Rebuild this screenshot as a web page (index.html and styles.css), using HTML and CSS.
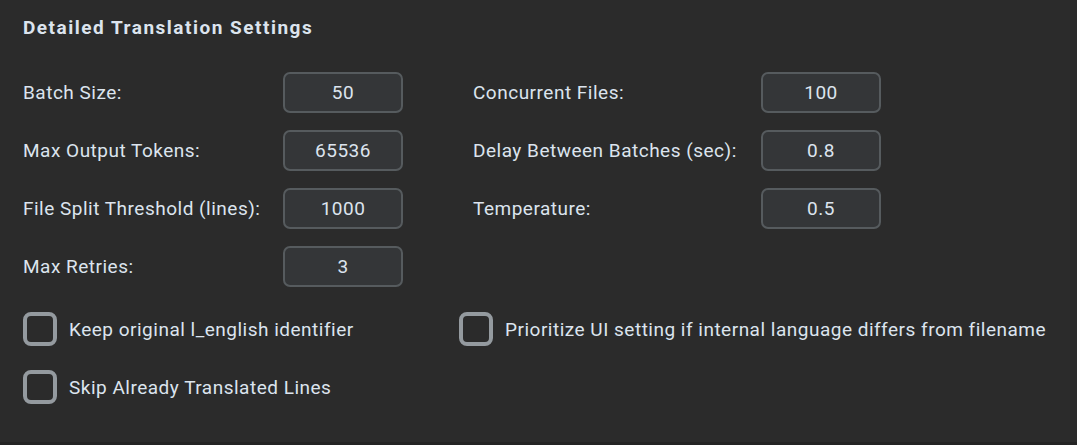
FILE: index.html
```html
<!DOCTYPE html>
<html>
<head>
<meta charset="utf-8">
<link rel="stylesheet" href="styles.css">
</head>
<body>
<div class="panel">
  <div class="title">Detailed Translation Settings</div>
  <div class="grid">
    <div class="label">Batch Size:</div>
    <div class="entry">50</div>
    <div class="label">Concurrent Files:</div>
    <div class="entry">100</div>

    <div class="label">Max Output Tokens:</div>
    <div class="entry">65536</div>
    <div class="label">Delay Between Batches (sec):</div>
    <div class="entry">0.8</div>

    <div class="label">File Split Threshold (lines):</div>
    <div class="entry">1000</div>
    <div class="label">Temperature:</div>
    <div class="entry">0.5</div>

    <div class="label">Max Retries:</div>
    <div class="entry">3</div>
  </div>
  <div class="checks">
    <label class="check"><span class="box"></span><span>Keep original l_english identifier</span></label>
    <label class="check"><span class="box"></span><span>Prioritize UI setting if internal language differs from filename</span></label>
    <label class="check"><span class="box"></span><span>Skip Already Translated Lines</span></label>
  </div>
</div>
<div class="bottom"></div>
</body>
</html>
```
FILE: styles.css
```css
html, body {
  margin: 0;
  padding: 0;
  background: #2b2b2b;
}
body {
  width: 1077px;
  height: 445px;
  overflow: hidden;
  font-family: Roboto, "Liberation Sans", sans-serif;
  color: #dce4ee;
  display: flex;
  flex-direction: column;
}
.panel {
  flex: 1;
  padding: 16px 0 0 23px;
}
.title {
  font-weight: bold;
  font-size: 19px;
  letter-spacing: 1.5px;
  line-height: 24px;
  height: 24px;
}
.grid {
  margin-top: 32px;
  display: grid;
  grid-template-columns: 260px 190px 288px 120px;
  grid-auto-rows: 41px;
  row-gap: 17px;
  align-items: center;
}
.label {
  font-size: 19px;
  letter-spacing: 0.5px;
}
.entry {
  box-sizing: border-box;
  width: 120px;
  height: 41px;
  border: 2px solid #565b5e;
  border-radius: 7px;
  background: #343638;
  font-size: 19px;
  letter-spacing: 0.5px;
  display: flex;
  align-items: center;
  justify-content: center;
}
.checks {
  margin-top: 25px;
  display: grid;
  grid-template-columns: 436px auto;
  grid-auto-rows: 34px;
  row-gap: 24px;
}
.check {
  display: flex;
  align-items: center;
  gap: 12px;
  font-size: 19px;
  letter-spacing: 0.5px;
}
.box {
  box-sizing: border-box;
  width: 34px;
  height: 34px;
  border: 4px solid #949a9f;
  border-radius: 8px;
  flex: none;
}
.bottom {
  height: 3px;
  background: #242424;
}
```
